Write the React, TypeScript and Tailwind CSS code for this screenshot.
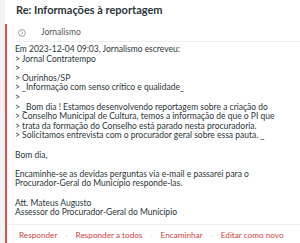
const quoted = [
  'Em 2023-12-04 09:03, Jornalismo escreveu:',
  '> Jornal Contratempo',
  '>',
  '> Ourinhos/SP',
  '> _Informação com senso crítico e qualidade_',
  '>',
  '> _Bom dia ! Estamos desenvolvendo reportagem sobre a criação do',
  '> Conselho Municipal de Cultura, temos a informação de que o PI que',
  '> trata da formação do Conselho está parado nesta procuradoria.',
  '> Solicitamos entrevista com o procurador geral sobre essa pauta. _',
  '',
  'Bom dia,',
  '',
  'Encaminhe-se as devidas perguntas via e-mail e passarei para o',
  'Procurador-Geral do Município responde-las.',
  '',
  'Att. Mateus Augusto',
  'Assessor do Procurador-Geral do Município',
];

const actions = ['Responder', 'Responder a todos', 'Encaminhar', 'Editar como novo'];

export default function App() {
  return (
    <div className="flex h-[243px] w-[300px] overflow-hidden bg-white font-['Lato',sans-serif] text-[#2c363a]">
      <div className="flex w-[5px] shrink-0 flex-col bg-[#f4f5f6]">
        <div className="h-[80px]" />
        <div className="h-[32px] bg-[#fbeeee]" />
      </div>
      <div className="flex min-w-0 flex-1 flex-col">
        <div className="h-[24px] shrink-0 pt-[3px] pl-[11px] text-[11px] leading-[13px] font-bold">
          Re: Informações à reportagem
        </div>
        <div className="flex flex-1 flex-col border-l-2 border-[#d9534f]">
          <div className="flex h-[17px] shrink-0 items-center pl-[11px] text-[8.5px] text-[#555]">
            <svg width="8" height="8" viewBox="0 0 8 8" className="mr-[15px]">
              <circle cx="4" cy="4" r="3.4" fill="none" stroke="#8a8f93" strokeWidth="0.8" />
              <path d="M3.3 2.4 L4.9 4 L3.3 5.6" fill="none" stroke="#8a8f93" strokeWidth="0.8" />
            </svg>
            Jornalismo
          </div>
          <div className="ml-[8px] border-t border-[#eef0f1] pt-[3px] pb-[6px] text-[8.5px] leading-[9.6px]">
            {quoted.map((line, i) => (
              <div key={i} className="h-[9.6px] whitespace-pre">
                {line}
              </div>
            ))}
          </div>
          <div className="flex items-center whitespace-nowrap border-t border-[#eef0f1] pt-[5px] pl-[12px] text-[8.2px] leading-[10px] text-[#c9453f]">
            {actions.map((a, i) => (
              <span key={a} className="flex shrink-0 items-center">
                {i > 0 && <span className="mx-[8px] text-[#d0d4d6]">·</span>}
                {a}
              </span>
            ))}
          </div>
        </div>
      </div>
    </div>
  );
}
